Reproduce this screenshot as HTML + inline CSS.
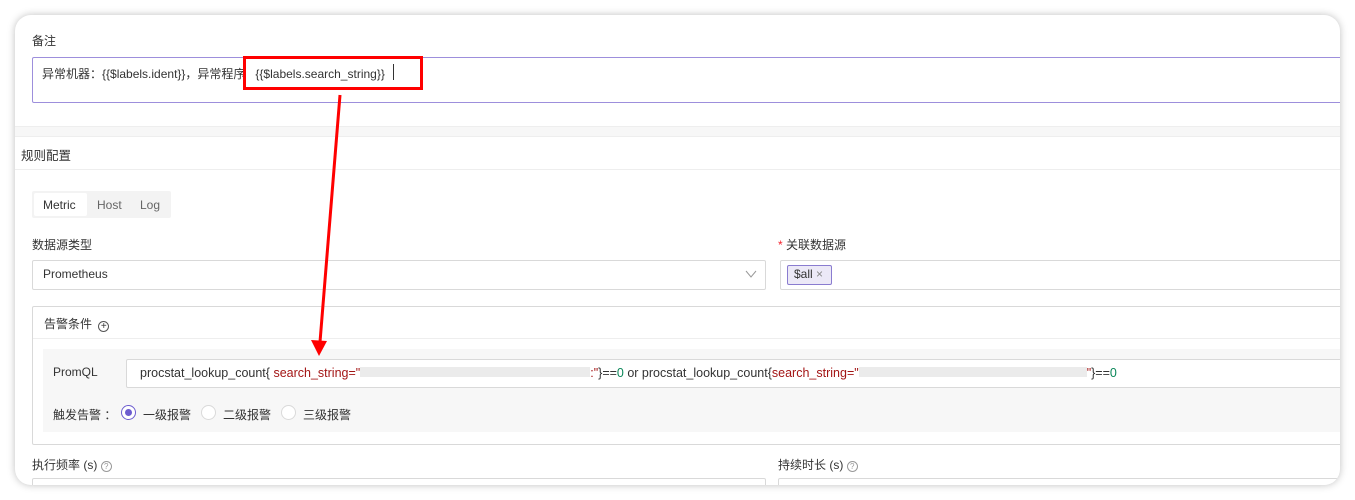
<!DOCTYPE html>
<html><head><meta charset="utf-8"><style>
*{box-sizing:border-box;margin:0;padding:0}
body{width:1355px;height:500px;background:#fff;font-family:"Liberation Sans","Noto Sans CJK SC",sans-serif;font-size:12px;color:#333;position:relative;overflow:hidden}
.card{position:absolute;left:15px;top:15px;width:1325px;height:470px;background:#fff;border-radius:16px;box-shadow:0 0 8px rgba(0,0,0,.25);overflow:hidden}
.a{position:absolute}
.lbl{position:absolute;font-size:12px;color:#333}
.box{position:absolute;border:1px solid #d9d9d9;background:#fff;border-radius:2px}
</style></head><body>
<div class="card">
 <div class="lbl" style="left:17px;top:17px">备注</div>
 <div class="a" style="left:17px;top:42px;width:1320px;height:46px;border:1px solid #9d8fdc;border-radius:2px"></div>
 <div class="lbl" style="left:27px;top:50px">异常机器：{{$labels.ident}}，异常程序 &nbsp;&nbsp;{{$labels.search_string}}</div>
 <div class="a" style="left:378px;top:49px;width:1px;height:16px;background:#333"></div>
 <div class="a" style="left:0;top:111px;width:1325px;height:11px;background:#f7f7f7;border-top:1px solid #eee;border-bottom:1px solid #eee"></div>
 <div class="lbl" style="left:6px;top:130px;font-size:12.5px">规则配置</div>
 <div class="a" style="left:0;top:154px;width:1325px;height:1px;background:#eee"></div>
 <div class="a" style="left:17px;top:176px;width:139px;height:27px;background:#f3f3f3;border-radius:2px"></div>
 <div class="a" style="left:19px;top:178px;width:53px;height:23px;background:#fff;border-radius:2px"></div>
 <div class="lbl" style="left:28px;top:183px">Metric</div>
 <div class="lbl" style="left:82px;top:183px;color:#666">Host</div>
 <div class="lbl" style="left:125px;top:183px;color:#666">Log</div>
 <div class="lbl" style="left:17px;top:221px">数据源类型</div>
 <div class="lbl" style="left:763px;top:221px"><span style="color:#f5222d">*</span> 关联数据源</div>
 <div class="box" style="left:17px;top:245px;width:734px;height:30px"></div>
 <div class="lbl" style="left:28px;top:252px">Prometheus</div>
 <svg class="a" style="left:730px;top:254px" width="12" height="10"><path d="M1 2l5 6 5-6" fill="none" stroke="#999" stroke-width="1"/></svg>
 <div class="box" style="left:765px;top:245px;width:570px;height:30px"></div>
 <div class="a" style="left:772px;top:250px;width:45px;height:20px;background:#ece9f7;border:1px solid #8a7cd0;border-radius:2px"></div>
 <div class="lbl" style="left:779px;top:252px">$all <span style="color:#888">×</span></div>
 <div class="box" style="left:17px;top:291px;width:1318px;height:139px"></div>
 <div class="lbl" style="left:29px;top:300px">告警条件 <span style="display:inline-block;width:11px;height:11px;border:1px solid #555;border-radius:50%;font-size:10px;line-height:9px;text-align:center;vertical-align:-1px;margin-left:3px">+</span></div>
 <div class="a" style="left:18px;top:323px;width:1316px;height:1px;background:#eee"></div>
 <div class="a" style="left:28px;top:334px;width:1300px;height:83px;background:#f7f7f7"></div>
 <div class="lbl" style="left:38px;top:350px">PromQL</div>
 <div class="box" style="left:111px;top:344px;width:1230px;height:29px"></div>
 <div class="lbl" style="left:125px;top:351px;font-size:12.5px;white-space:nowrap">procstat_lookup_count{ <span style="color:#a31515">search_string="</span><span style="display:inline-block;width:230px;height:10px;background:#ebebeb"></span><span style="color:#a31515">:"</span>}==<span style="color:#098658">0</span> or procstat_lookup_count{<span style="color:#a31515">search_string="</span><span style="display:inline-block;width:228px;height:10px;background:#ebebeb"></span><span style="color:#a31515">"</span>}==<span style="color:#098658">0</span></div>
 <div class="lbl" style="left:38px;top:391px">触发告警 ：</div>
 <div class="a" style="left:106px;top:390px;width:15px;height:15px;border:1px solid #6c5ccf;border-radius:50%;background:#fff"><div style="margin:3px;width:7px;height:7px;border-radius:50%;background:#6c5ccf"></div></div>
 <div class="lbl" style="left:128px;top:391px">一级报警</div>
 <div class="a" style="left:186px;top:390px;width:15px;height:15px;border:1px solid #d9d9d9;border-radius:50%;background:#fff"></div>
 <div class="lbl" style="left:208px;top:391px">二级报警</div>
 <div class="a" style="left:266px;top:390px;width:15px;height:15px;border:1px solid #d9d9d9;border-radius:50%;background:#fff"></div>
 <div class="lbl" style="left:288px;top:391px">三级报警</div>
 <div class="lbl" style="left:17px;top:441px">执行频率 (s) <span style="display:inline-block;width:11px;height:11px;border:1px solid #999;border-radius:50%;font-size:8px;line-height:9px;text-align:center;color:#999">?</span></div>
 <div class="lbl" style="left:763px;top:441px">持续时长 (s) <span style="display:inline-block;width:11px;height:11px;border:1px solid #999;border-radius:50%;font-size:8px;line-height:9px;text-align:center;color:#999">?</span></div>
 <div class="box" style="left:17px;top:463px;width:734px;height:30px"></div>
 <div class="box" style="left:763px;top:463px;width:570px;height:30px"></div>
</div>
<div class="a" style="left:243px;top:56px;width:180px;height:34px;border:3px solid #f00"></div>
<svg class="a" style="left:0;top:0" width="1355" height="500"><line x1="340" y1="95" x2="320" y2="342" stroke="#f00" stroke-width="3"/><path d="M311 340 L319 356 L327 341 Z" fill="#f00"/></svg>
</body></html>
